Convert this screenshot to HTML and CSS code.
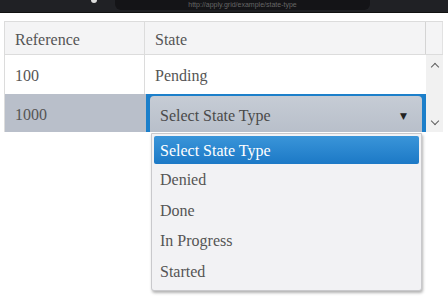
FILE: index.html
```html
<!DOCTYPE html>
<html lang="en">
<head>
  <meta charset="UTF-8" />
  <title>State grid</title>
  <link rel="stylesheet" href="styles.css">
</head>
<body>
  <div class="chrome">
    <span class="chrome-dot"></span>
    <div class="url"><span>http://apply.grid/example/state-type</span></div>
  </div>

  <div class="page">
    <div class="grid">
      <div class="grid-head">
        <div class="cell ref">Reference</div>
        <div class="cell state">State</div>
        <div class="cell filler"></div>
      </div>
      <div class="grid-body">
        <div class="rows">
          <div class="row">
            <div class="cell ref">100</div>
            <div class="cell state">Pending</div>
          </div>
          <div class="row selected">
            <div class="cell ref">1000</div>
            <div class="cell state editing">
              <div class="select">
                <span>Select State Type</span>
                <span class="caret">&#9660;</span>
              </div>
            </div>
          </div>
        </div>
        <div class="scrollbar">
          <span class="arrow up"></span>
          <span class="arrow down"></span>
        </div>
      </div>
    </div>

    <ul class="dropdown">
      <li class="active">Select State Type</li>
      <li>Denied</li>
      <li>Done</li>
      <li>In Progress</li>
      <li>Started</li>
    </ul>
  </div>
</body>
</html>
```

FILE: styles.css
```css
* {
  margin: 0;
  padding: 0;
  box-sizing: border-box;
}

body {
  width: 448px;
  height: 304px;
  background: #fff;
  font-family: 'Liberation Serif', 'Times New Roman', serif;
  font-size: 16px;
  color: #555;
  overflow: hidden;
}

.chrome {
  height: 13px;
  background: #202125;
  border-bottom: 1px solid #111;
  display: flex;
  align-items: flex-start;
}

.chrome-dot {
  width: 6px;
  height: 3px;
  margin-left: 91px;
  background: #ddd;
  border-radius: 0 0 3px 3px;
}

.url {
  width: 255px;
  height: 10px;
  margin-left: 18px;
  background: #141417;
  border-radius: 0 0 6px 6px;
  font-family: 'Liberation Sans', Arial, sans-serif;
  font-size: 7px;
  line-height: 9px;
  color: #666;
  text-align: center;
}

.page {
  position: relative;
  padding: 8px 5px 0 4px;
}

.grid {
  border-top: 1px solid #dcdcdc;
  border-left: 1px solid #dcdcdc;
}

.grid-head {
  display: flex;
  height: 33px;
  background: #f4f4f5;
  border-bottom: 1px solid #dcdcdc;
}

.cell {
  display: flex;
  align-items: center;
  padding-left: 10px;
  padding-top: 3px;
}

.ref {
  width: 140px;
  border-right: 1px solid #dcdcdc;
}

.state {
  flex: 1;
}

.grid-head .state {
  border-right: 1px solid #d4d4d4;
}

.grid-head .filler {
  width: 17px;
  border-right: 1px solid #e2e2e2;
}

.grid-body {
  display: flex;
}

.rows {
  flex: 1;
}

.row {
  display: flex;
  height: 39px;
  background: #fff;
}

.row.selected {
  height: 38px;
  background: #b9bfca;
}

.row.selected .ref {
  border-right: none;
  width: 141px;
}

.editing {
  padding: 2px 4px 0 4px;
  background: #1c7fca;
  align-items: stretch;
}

.select {
  flex: 1;
  display: flex;
  align-items: center;
  justify-content: space-between;
  padding: 3px 15px 0 10px;
  background: linear-gradient(#c6ccd5, #b8bfca);
  border-radius: 4px 4px 0 0;
  color: #4a4a4a;
}

.caret {
  font-family: 'DejaVu Sans', sans-serif;
  font-size: 9px;
  color: #222;
}

.scrollbar {
  width: 17px;
  background: #f1f1f1;
  display: flex;
  flex-direction: column;
  justify-content: space-between;
  align-items: center;
  padding: 6px 0 5px;
}

.arrow {
  width: 6px;
  height: 6px;
  border-left: 1.5px solid #606060;
  border-top: 1.5px solid #606060;
}

.arrow.up {
  transform: rotate(45deg);
  margin-top: 3px;
}

.arrow.down {
  transform: rotate(-135deg);
  margin-bottom: 3px;
}

.dropdown {
  position: absolute;
  left: 151px;
  top: 120px;
  width: 271px;
  height: 158px;
  list-style: none;
  background: #f2f2f4;
  border: 1px solid #c9c9cc;
  border-radius: 0 0 3px 3px;
  box-shadow: 1px 2px 3px rgba(0, 0, 0, 0.3);
  padding: 2px;
}

.dropdown li {
  height: 30.5px;
  line-height: 30.5px;
  padding-left: 6px;
}

.dropdown li.active {
  height: 28px;
  line-height: 29px;
  margin-bottom: 1px;
  color: #fff;
  background: linear-gradient(#3a95d9, #1c79c6);
  border-radius: 2px;
}
```
